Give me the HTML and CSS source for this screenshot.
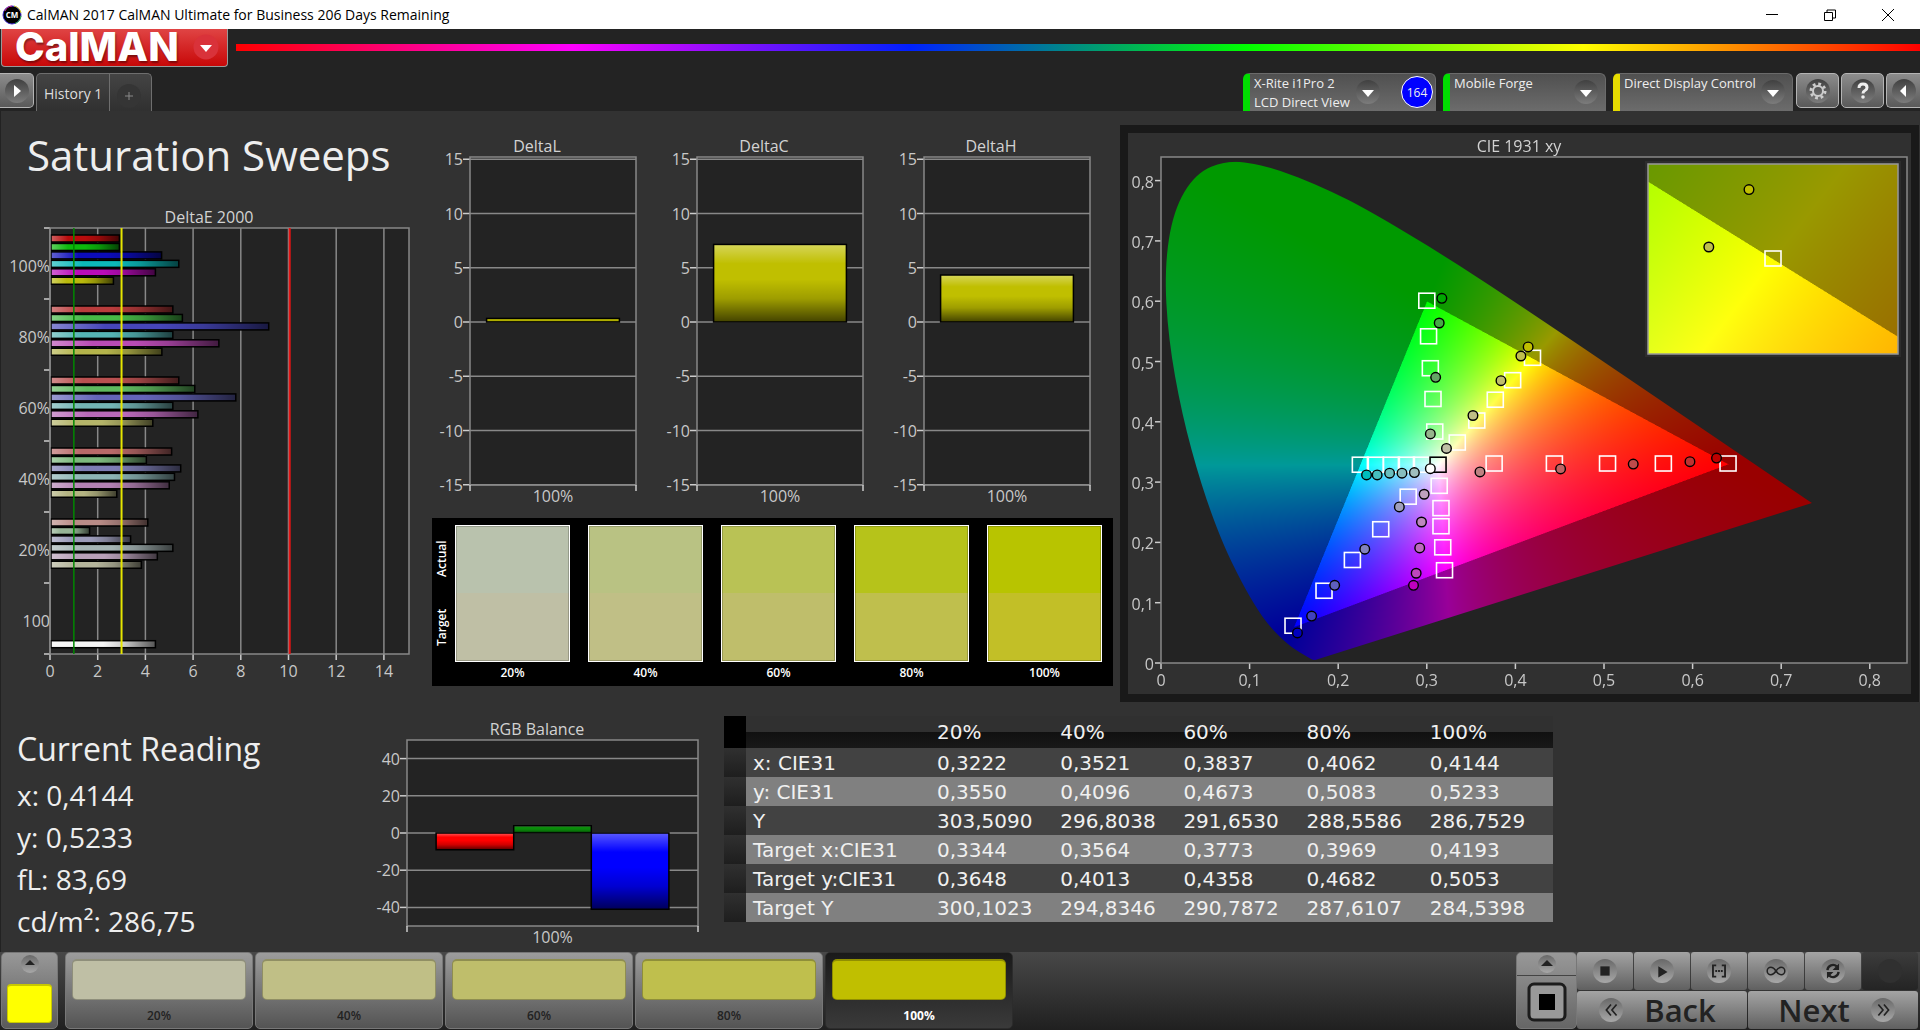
FILE: index.html
```html
<!DOCTYPE html>
<html lang="en">
<head>
    <meta charset="UTF-8">
    <meta name="viewport" content="width=device-width, initial-scale=1.0">
    <title>CalMAN 2017 CalMAN Ultimate for Business</title>
    <link rel="stylesheet" href="styles.css">
</head>
<body>
    <div class="titlebar">
        <svg class="app-icon" viewBox="0 0 20 20">
            <circle cx="10" cy="10" r="9" fill="#000" stroke="#3c28c8" stroke-width="1"/>
            <path d="M3 6a8.500 8.500 0 0 1 7-5" fill="none" stroke="#d02a8a"/>
            <path d="M12 1a9 9 0 0 1 7 7" fill="none" stroke="#c8c820"/>
            <path d="M19 11a9 9 0 0 1-6 7.500" fill="none" stroke="#28b43c"/>
            <text x="10" y="13" text-anchor="middle">CM</text>
        </svg>
        <span class="window-title">CalMAN 2017 CalMAN Ultimate for Business 206 Days Remaining</span>
        <div class="window-controls">
            <button aria-label="Minimize"><svg viewBox="0 0 14 14"><path d="M1 6.500h12"/></svg></button>
            <button aria-label="Restore"><svg viewBox="0 0 14 14"><path d="M1.500 4.500h8v8h-8zM4 4V2h8.500v8H10"/></svg></button>
            <button aria-label="Close"><svg viewBox="0 0 14 14"><path d="M1 1l12 12M13 1L1 13"/></svg></button>
        </div>
    </div>

    <header class="header">
        <div class="brand-row">
            <button class="logo">CalMAN
                <svg viewBox="0 0 26 26"><circle cx="13" cy="13" r="12.500" fill="#d9323a"/><path d="M7 11h12l-6 7z" fill="#fff"/></svg>
            </button>
            <div class="rainbow"></div>
        </div>
        <div class="tab-row">
            <button class="square-btn nav-left" aria-label="Expand">
                <svg viewBox="0 0 28 28"><circle cx="14" cy="14" r="12" fill="url(#knob)"/><path d="M11 8v12l7-6z" fill="#fff"/></svg>
            </button>
            <div class="tabs">
                <button class="tab">History 1</button>
                <button class="tab tab-add" aria-label="Add tab">
                    <svg viewBox="0 0 28 28"><circle cx="14" cy="14" r="12" fill="#353535"/><path d="M14 10v8M10 14h8" stroke="#8a8a8a"/></svg>
                </button>
            </div>
            <div class="devices">
                <button class="device device-meter">
                    <span>X-Rite i1Pro 2<br>LCD Direct View</span>
                    <svg viewBox="0 0 28 28"><circle cx="14" cy="14" r="12" fill="url(#knob)"/><path d="M8 12h12l-6 7z" fill="#fff"/></svg>
                    <b class="count">164</b>
                </button>
                <button class="device device-source">
                    <span>Mobile Forge</span>
                    <svg viewBox="0 0 28 28"><circle cx="14" cy="14" r="12" fill="url(#knob)"/><path d="M8 12h12l-6 7z" fill="#fff"/></svg>
                </button>
                <button class="device device-display">
                    <span>Direct Display Control</span>
                    <svg viewBox="0 0 28 28"><circle cx="14" cy="14" r="12" fill="url(#knob)"/><path d="M8 12h12l-6 7z" fill="#fff"/></svg>
                </button>
                <button class="square-btn" aria-label="Settings">
                    <svg viewBox="0 0 28 28"><circle cx="14" cy="14" r="12" fill="url(#knob)"/><circle cx="14" cy="14" r="5" fill="none" stroke="#ccc" stroke-width="2"/><circle cx="14" cy="14" r="7" fill="none" stroke="#ccc" stroke-width="3" stroke-dasharray="2.750 2.750"/></svg>
                </button>
                <button class="square-btn" aria-label="Help">
                    <svg viewBox="0 0 28 28"><circle cx="14" cy="14" r="12" fill="url(#knob)"/><path d="M10 11q0-4 4-4t4 3.500q0 2-2 3t-2 3" fill="none" stroke="#eee" stroke-width="3"/><circle cx="14" cy="20" r="1.800" fill="#eee"/></svg>
                </button>
                <button class="square-btn nav-right" aria-label="Collapse">
                    <svg viewBox="0 0 28 28"><circle cx="14" cy="14" r="12" fill="url(#knob)"/><path d="M16 8v12l-6-6z" fill="#fff"/></svg>
                </button>
            </div>
        </div>
    </header>

    <main class="workspace">
        <div class="upper">
            <section class="sweeps">
                <h1>Saturation Sweeps</h1>
                <svg id="delta-e" viewBox="0 0 431 490"></svg>
            </section>

            <section class="deltas">
                <svg id="delta-lch" viewBox="0 0 681 407"></svg>
                <div class="swatches">
                    <div class="swatch-side"><span>Actual</span><span>Target</span></div>
                    <figure><div class="swatch swatch-20"></div><figcaption>20%</figcaption></figure>
                    <figure><div class="swatch swatch-40"></div><figcaption>40%</figcaption></figure>
                    <figure><div class="swatch swatch-60"></div><figcaption>60%</figcaption></figure>
                    <figure><div class="swatch swatch-80"></div><figcaption>80%</figcaption></figure>
                    <figure><div class="swatch swatch-100"></div><figcaption>100%</figcaption></figure>
                </div>
            </section>

            <section class="cie">
                <canvas id="gamut" width="1566" height="1122"></canvas>
                <svg id="cie-chart" viewBox="0 0 783 561"></svg>
            </section>
        </div>

        <div class="lower">
            <section class="reading">
                <h2>Current Reading</h2>
                <p>x: 0,4144</p>
                <p>y: 0,5233</p>
                <p>fL: 83,69</p>
                <p>cd/m²: 286,75</p>
            </section>

            <section class="balance">
                <svg id="rgb-balance" viewBox="0 0 344 241"></svg>
            </section>

            <table class="results">
                <thead>
                    <tr><td class="handle"></td><td></td><th>20%</th><th>40%</th><th>60%</th><th>80%</th><th>100%</th></tr>
                </thead>
                <tbody>
                    <tr><td class="handle"></td><th>x: CIE31</th><td>0,3222</td><td>0,3521</td><td>0,3837</td><td>0,4062</td><td>0,4144</td></tr>
                    <tr><td class="handle"></td><th>y: CIE31</th><td>0,3550</td><td>0,4096</td><td>0,4673</td><td>0,5083</td><td>0,5233</td></tr>
                    <tr><td class="handle"></td><th>Y</th><td>303,5090</td><td>296,8038</td><td>291,6530</td><td>288,5586</td><td>286,7529</td></tr>
                    <tr><td class="handle"></td><th>Target x:CIE31</th><td>0,3344</td><td>0,3564</td><td>0,3773</td><td>0,3969</td><td>0,4193</td></tr>
                    <tr><td class="handle"></td><th>Target y:CIE31</th><td>0,3648</td><td>0,4013</td><td>0,4358</td><td>0,4682</td><td>0,5053</td></tr>
                    <tr><td class="handle"></td><th>Target Y</th><td>300,1023</td><td>294,8346</td><td>290,7872</td><td>287,6107</td><td>284,5398</td></tr>
                </tbody>
            </table>
        </div>
    </main>

    <footer class="footer">
        <button class="current-color" aria-label="Pattern color">
            <svg viewBox="0 0 20 20"><circle cx="10" cy="10" r="9" fill="url(#knob-light)"/><path d="M5 11l5-5 5 5z" fill="#222"/></svg>
            <span class="color-chip"></span>
        </button>
        <div class="patches">
            <button class="patch patch-20"><span></span>20%</button>
            <button class="patch patch-40"><span></span>40%</button>
            <button class="patch patch-60"><span></span>60%</button>
            <button class="patch patch-80"><span></span>80%</button>
            <button class="patch patch-100 selected"><span></span>100%</button>
        </div>
        <div class="stop-box">
            <button aria-label="Show more"><svg viewBox="0 0 20 20"><circle cx="10" cy="10" r="9" fill="url(#knob-light)"/><path d="M4 12l6-6 6 6z" fill="#222"/></svg></button>
            <button aria-label="Pattern window"><svg class="big" viewBox="0 0 40 40"><rect x="2" y="2" width="36" height="36" rx="5" fill="#999" stroke="#1c1c1c" stroke-width="3"/><path d="M12 12h16v16H12z"/></svg></button>
        </div>
        <div class="transport">
            <button aria-label="Stop"><svg viewBox="0 0 28 28"><circle cx="14" cy="14" r="13" fill="url(#knob-light)"/><path d="M9 9h10v10H9z" fill="#222"/></svg></button>
            <button aria-label="Play"><svg viewBox="0 0 28 28"><circle cx="14" cy="14" r="13" fill="url(#knob-light)"/><path d="M10 9v12l10-6z" fill="#222"/></svg></button>
            <button aria-label="Measure series"><svg viewBox="0 0 28 28"><circle cx="14" cy="14" r="13" fill="url(#knob-light)"/><path d="M11 8H7.500v12H11M17 8h3.500v12H17" fill="none" stroke="#222" stroke-width="2"/><path d="M10 14h8" stroke="#222" stroke-width="2" stroke-dasharray="2 1"/></svg></button>
            <button aria-label="Continuous"><svg viewBox="0 0 28 28"><circle cx="14" cy="14" r="13" fill="url(#knob-light)"/><path d="M14 14c-2-3-3.500-4-5.500-4a4 4 0 0 0 0 8c2 0 3.500-1 5.500-4s3.500-4 5.500-4a4 4 0 0 1 0 8c-2 0-3.500-1-5.500-4z" fill="none" stroke="#222" stroke-width="1.600"/></svg></button>
            <button aria-label="Refresh"><svg viewBox="0 0 28 28"><circle cx="14" cy="14" r="13" fill="url(#knob-light)"/><path d="M8 13a6 6 0 0 1 10-4M20 15a6 6 0 0 1-10 4" fill="none" stroke="#222" stroke-width="2.500"/><path d="M20.500 6v7h-7zM7.500 22v-7h7z" fill="#222"/></svg></button>
            <button class="disabled" aria-label="Unused" disabled><svg viewBox="0 0 28 28"><circle cx="14" cy="14" r="13" fill="#303030"/></svg></button>
            <button class="wide">
                <svg viewBox="0 0 28 28"><circle cx="14" cy="14" r="13" fill="url(#knob-light)"/><path d="M14 8l-5 6 5 6M20 8l-5 6 5 6" fill="none" stroke="#222" stroke-width="1.800"/></svg>Back
            </button>
            <button class="wide next">Next
                <svg viewBox="0 0 28 28"><circle cx="14" cy="14" r="13" fill="url(#knob-light)"/><path d="M9 8l5 6-5 6M15 8l5 6-5 6" fill="none" stroke="#222" stroke-width="1.800"/></svg>
            </button>
        </div>
    </footer>

    <!-- shared gradients -->
    <svg class="defs" width="0" height="0">
        <linearGradient id="knob" x1="0" y1="0" x2="0" y2="1"><stop offset="0" stop-color="#404040"/><stop offset="1" stop-color="#7c7c7c"/></linearGradient>
        <linearGradient id="knob-light" x1="0" y1="0" x2="0" y2="1"><stop offset="0" stop-color="#686868"/><stop offset="1" stop-color="#a8a8a8"/></linearGradient>
        <linearGradient id="shade-v" x1="0" y1="0" x2="0" y2="1">
            <stop offset="0" stop-color="#fff" stop-opacity=".35"/><stop offset=".25" stop-color="#fff" stop-opacity="0"/>
            <stop offset=".45" stop-color="#000" stop-opacity="0"/><stop offset=".7" stop-color="#000" stop-opacity=".18"/><stop offset="1" stop-color="#000" stop-opacity=".65"/>
        </linearGradient>
        <linearGradient id="shade-h" x1="0" y1="0" x2="1" y2="0">
            <stop offset="0" stop-color="#fff" stop-opacity=".35"/><stop offset=".25" stop-color="#fff" stop-opacity="0"/>
            <stop offset=".5" stop-color="#000" stop-opacity="0"/><stop offset=".7" stop-color="#000" stop-opacity=".18"/><stop offset="1" stop-color="#000" stop-opacity=".65"/>
        </linearGradient>
    </svg>

    <script src="charts.js"></script>
</body>
</html>
```
FILE: styles.css
```css
* {
    box-sizing: border-box;
}
body {
    margin: 0;
    min-height: 100vh;
    display: flex;
    flex-direction: column;
    background-color: #232323;
    color: #eee;
    font-family: "Open Sans", "Noto Sans", sans-serif;
}
button {
    border: 0;
    padding: 0;
    background: none;
    color: inherit;
    font: inherit;
    cursor: pointer;
}
svg {
    display: block;
}
.defs {
    position: absolute;
}

/* window title bar */
.titlebar {
    display: flex;
    align-items: center;
    height: 29px;
    padding-left: 2px;
    background-color: #fff;
    color: #000;
}
.app-icon {
    width: 20px;
    height: 20px;
}
.app-icon text {
    fill: #fff;
    font-size: 8px;
    font-weight: 700;
}
.window-title {
    flex: 1;
    padding-left: 5px;
    font-size: 14px;
}
.window-controls {
    display: flex;
    gap: 44px;
    padding-right: 25px;
}
.window-controls svg {
    width: 14px;
    height: 14px;
    fill: none;
    stroke: #000;
}

/* header */
.brand-row {
    display: flex;
    gap: 8px;
    padding-left: 1px;
}
.logo {
    display: flex;
    align-items: center;
    gap: 14px;
    height: 38px;
    padding: 0 8px 2px 13px;
    border: 1px solid #999;
    border-top: 0;
    border-radius: 0 0 4px 4px;
    background: linear-gradient(#e04444, #c80808);
    color: #fff;
    font-family: Inter, sans-serif;
    font-size: 40px;
    font-weight: 800;
    line-height: 36px;
    text-shadow: 1px 2px 2px rgba(0, 0, 0, .4);
}
.logo svg {
    width: 26px;
    height: 26px;
}
.rainbow {
    flex: 1;
    height: 7px;
    margin-top: 15px;
    background: linear-gradient(90deg, #f00, #f0f, #0020ff, #0f0, #ff0, #f00);
}
.tab-row {
    display: flex;
    align-items: flex-start;
    padding-top: 6px;
}
.square-btn {
    width: 43px;
    height: 35px;
    display: flex;
    align-items: center;
    justify-content: center;
    border: 1px solid #b4b4b4;
    border-radius: 5px;
    background: linear-gradient(#8c8c8c, #5a5a5a);
}
.square-btn svg,
.tab svg,
.device svg {
    width: 28px;
    height: 28px;
}
.nav-left {
    width: 34px;
    border-left: 0;
    border-radius: 0 5px 5px 0;
}
.nav-right {
    width: 34px;
    border-right: 0;
    border-radius: 5px 0 0 5px;
}
.tabs {
    display: flex;
    margin-left: 2px;
    border: 1px solid #6e6e6e;
    border-bottom: 0;
    border-radius: 5px 5px 0 0;
    background: linear-gradient(#444, #303030);
}
.tab {
    height: 37px;
    padding: 2px 7px 0;
    color: #ddd;
    font-size: 14px;
}
.tab-add {
    border-left: 1px solid #6e6e6e;
    padding: 6px 8px 0 5px;
}
.devices {
    display: flex;
    gap: 2px;
    margin-left: auto;
}
.device {
    display: flex;
    height: 38px;
    margin-right: 5px;
    padding-left: 4px;
    border: 1px solid #6a6a6a;
    border-bottom: 0;
    border-left: 7px solid #0d0;
    border-radius: 6px 6px 0 0;
    background: linear-gradient(#505050, #6c6c6c);
    font-size: 13px;
    line-height: 19px;
    text-align: left;
    white-space: nowrap;
}
.device span {
    flex: 1;
}
.device > svg {
    flex: none;
    margin: 4px 5px 0 0;
}
.device-meter {
    width: 193px;
}
.device-source {
    width: 163px;
}
.device-display {
    width: 180px;
    margin-right: 1px;
    border-left-color: #e6dc00;
}
.device-meter > svg {
    margin-right: 9px;
}
.count {
    flex: none;
    display: flex;
    align-items: center;
    justify-content: center;
    width: 32px;
    height: 32px;
    margin: 2px 2px 0 10px;
    border: 1px solid #fff;
    border-radius: 50%;
    background-color: #00f;
    font-size: 12px;
    font-weight: 400;
}

/* workspace */
.workspace {
    flex: 1;
    display: flex;
    flex-direction: column;
    border-left: 1px solid #222;
    background-color: #323232;
}
.upper {
    display: grid;
    grid-template-columns: 431fr 681fr 807fr;
    align-items: start;
}
.upper svg,
.balance svg {
    width: 100%;
    height: auto;
}
.sweeps h1 {
    margin: 0;
    padding: 14px 0 0 26px;
    font-size: 42px;
    font-weight: 400;
    line-height: 60px;
    height: 89px;
    white-space: nowrap;
}
.chart-text,
.chart-title {
    fill: #c8c8c8;
    font-size: 16px;
}
.chart-title {
    fill: #d2d2d2;
}
.swatches {
    display: grid;
    grid-template-columns: 10px repeat(5, 1fr);
    height: 168px;
    padding: 7px 2px 0 4px;
    background-color: #000;
    color: #fff;
    font-size: 12px;
    font-weight: 600;
}
.swatch-side {
    display: flex;
    flex-direction: row-reverse;
    justify-content: space-around;
    width: 12px;
    height: 137px;
    writing-mode: vertical-rl;
    transform: rotate(180deg);
    line-height: 12px;
}
.swatches figure {
    margin: 0;
    padding: 0 9px;
    text-align: center;
}
.swatch {
    height: 137px;
    margin-bottom: 2px;
    border: 1px solid #fff;
    box-shadow: inset 0 0 0 1px rgba(0, 0, 0, .2);
}
.swatch-20 { background: linear-gradient(#b9c2ad 50%, #bfbfa5 50%); }
.swatch-40 { background: linear-gradient(#b9c283 50%, #c0bf86 50%); }
.swatch-60 { background: linear-gradient(#b9c255 50%, #bfbe6b 50%); }
.swatch-80 { background: linear-gradient(#b6c31a 50%, #bfbf4d 50%); }
.swatch-100 { background: linear-gradient(#b8c400 50%, #c2bf27 50%); }
.cie {
    display: grid;
    margin: 14px 1px 0 7px;
    border: 8px solid #191919;
    background-color: #303030;
}
.cie canvas,
.cie svg {
    grid-area: 1 / 1;
    width: 100%;
}

.lower {
    display: grid;
    grid-template-columns: 364fr 344fr 15fr 829fr 367fr;
    align-items: start;
}
.reading {
    padding: 26px 0 0 16px;
    white-space: nowrap;
}
.reading h2,
.reading p {
    margin: 0;
    font-size: 28px;
    font-weight: 400;
    line-height: 42px;
}
.reading h2 {
    margin-bottom: 4px;
    font-size: 32px;
}
.balance {
    padding-top: 3px;
}
.results {
    grid-column: 4;
    width: 100%;
    margin-top: 14px;
    border-collapse: collapse;
    table-layout: fixed;
    color: #f0f0f0;
    font-family: "DejaVu Sans", sans-serif;
    font-size: 20px;
    line-height: 24px;
}
.results td,
.results th {
    width: 15%;
    height: 29px;
    padding: 0;
    font-weight: 400;
    text-align: left;
}
.results .handle {
    width: 22px;
    background: linear-gradient(#303030, #1e1e1e);
}
.results tr > :nth-child(2) {
    width: 191px;
    padding-left: 7px;
}
.results thead tr {
    background: linear-gradient(#303030 50%, #101010 50%, #181818);
}
.results thead th,
.results thead td {
    height: 32px;
}
.results thead .handle {
    background: #000;
}
.results tbody tr {
    background-color: #424242;
}
.results tbody tr:nth-child(even) {
    background-color: #808080;
}

/* bottom bar */
.footer {
    display: flex;
    align-items: flex-start;
    height: 78px;
    padding: 0 0 0 1px;
    background: linear-gradient(#484848, #202020);
    color: #222;
}
.current-color {
    display: flex;
    flex-direction: column;
    align-items: center;
    justify-content: space-between;
    width: 57px;
    height: 77px;
    padding: 1px 0 5px;
    border: 1px solid #777;
    border-radius: 5px;
    background: linear-gradient(#989898, #5a5a5a);
}
.current-color svg,
.stop-box svg {
    width: 20px;
    height: 20px;
}
.color-chip {
    width: 45px;
    height: 39px;
    border: 1px solid #c8c800;
    border-top-width: 2px;
    border-radius: 4px;
    background-color: #ff0;
}
.patches {
    flex: 1;
    display: flex;
    gap: 2px;
    margin-left: 7px;
}
.patch {
    width: 188px;
    height: 77px;
    display: flex;
    flex-direction: column;
    padding: 6px 6px 0;
    border: 1px solid #777;
    border-radius: 5px;
    background: linear-gradient(#9c9c9c, #545454);
    font-size: 12px;
    font-weight: 600;
    line-height: 24px;
    text-align: center;
}
.patch span {
    display: block;
    align-self: stretch;
    height: 46px;
    margin-bottom: 4px;
    border: 1px solid rgba(0, 0, 0, .25);
    border-top-width: 2px;
    border-radius: 5px;
}
.patch-20 span { background-color: #bfbfa5; }
.patch-40 span { background-color: #c0bf86; }
.patch-60 span { background-color: #bfbe6b; }
.patch-80 span { background-color: #bfbf4d; }
.patch-100 span { background-color: #c0bf00; }
.patch.selected {
    border-color: #2c2c2c;
    background: linear-gradient(#1a1a1a, #3a3a3a);
    color: #fff;
    font-weight: 700;
}
.stop-box {
    display: flex;
    flex-direction: column;
    width: 61px;
    height: 77px;
    border: 1px solid #777;
    border-radius: 5px;
    background: linear-gradient(#989898, #666);
}
.stop-box button {
    display: flex;
    align-items: center;
    justify-content: center;
    height: 52px;
}
.stop-box button:first-child {
    height: 23px;
    border-bottom: 1px solid #444;
}
.stop-box .big {
    width: 40px;
    height: 40px;
}
.transport {
    display: grid;
    grid-template-columns: repeat(6, 56px);
    grid-template-rows: 38px 38px;
    gap: 1px;
    padding-right: 2px;
}
.transport button {
    display: flex;
    align-items: center;
    justify-content: center;
    border-radius: 3px;
    background: linear-gradient(#a4a4a4, #606060);
}
.transport svg {
    width: 26px;
    height: 26px;
}
.transport .disabled {
    background: linear-gradient(#3c3c3c, #242424);
}
.transport .wide {
    grid-column: span 3;
    gap: 20px;
    padding-right: 10px;
    font-size: 31px;
    font-weight: 600;
    line-height: 36px;
}
.transport .next {
    padding: 0 0 0 8px;
}
```
FILE: charts.js
```js
const SVG_NS = 'http://www.w3.org/2000/svg';

function add(parent, tag, attrs, content) {
    const el = document.createElementNS(SVG_NS, tag);
    for (const key in attrs) {
        el.setAttribute(key, attrs[key]);
    }
    if (content !== undefined) {
        el.textContent = content;
    }
    parent.appendChild(el);
    return el;
}

function line(svg, x1, y1, x2, y2, color, width) {
    add(svg, 'line', { x1, y1, x2, y2, stroke: color, 'stroke-width': width || 1 });
}

function label(svg, x, y, text, anchor, cls) {
    add(svg, 'text', { x, y, class: cls || 'chart-text', 'text-anchor': anchor || 'middle' }, text);
}

// Bar with a glossy overlay
function bar(svg, x, y, width, height, color, shade) {
    add(svg, 'rect', { x, y, width, height, fill: color });
    add(svg, 'rect', { x, y, width, height, fill: 'url(#' + shade + ')', stroke: '#000', 'stroke-width': 1.5 });
}

// DeltaE 2000, horizontal bars
function drawDeltaE() {
    const svg = document.getElementById('delta-e');
    const left = 49, right = 408, top = 28, bottom = 454;
    const unit = 23.85;
    const band = (bottom - top) / 6;
    const groups = [
        ['100%', [2.91, 2.91, 4.68, 5.4, 4.42, 2.66], ['#b90c0c', '#0cb90c', '#0c0cb9', '#0cb9b9', '#b90cb9', '#b9b90c']],
        ['80%', [5.15, 5.55, 9.17, 5.15, 7.08, 4.69], ['#b93c3c', '#46b946', '#4646b9', '#55b4b4', '#b94bb4', '#b4b44b']],
        ['60%', [5.4, 6.07, 7.79, 5.15, 6.2, 4.31], ['#b95050', '#5fb95f', '#6464b9', '#73b4b4', '#b969b9', '#b4b469']],
        ['40%', [5.1, 4.04, 5.48, 5.22, 5, 2.8], ['#b96969', '#7db97d', '#7d7db4', '#8cb4b4', '#b482b4', '#b4b482']],
        ['20%', [4.1, 1.66, 3.38, 5.15, 4.5, 3.83], ['#b98c87', '#96b496', '#9b9bb9', '#a5b4b4', '#b9a0b9', '#b4b49b']],
        ['100', [0, 0, 0, 0, 0, 0, 4.42], ['', '', '', '', '', '', '#f5f5f5']]
    ];

    label(svg, 208, 23, 'DeltaE 2000', 'middle', 'chart-title');
    add(svg, 'rect', { x: left, y: top, width: right - left, height: bottom - top, fill: '#232323' });
    for (let v = 0; v <= 14; v += 2) {
        const x = left + v * unit;
        line(svg, x, top, x, bottom, '#888', 1.5);
        line(svg, x, bottom, x, bottom + 6, '#ccc', 1.5);
        label(svg, x, bottom + 23, v);
    }
    groups.forEach(([name, values, colors], g) => {
        const start = top + g * band;
        values.forEach((value, i) => {
            if (value) {
                bar(svg, left + 1, start + 7 + i * 8.45, value * unit - 1, 7, colors[i], 'shade-h');
            }
        });
        line(svg, left - 6, start, left, start, '#ccc', 1.5);
        label(svg, left, start + band / 2 + 8, name, 'end');
    });
    line(svg, left - 6, bottom, left, bottom, '#ccc', 1.5);
    add(svg, 'rect', { x: left, y: top, width: right - left, height: bottom - top, fill: 'none', stroke: '#888', 'stroke-width': 1.5 });
    // tolerance lines
    line(svg, left + unit, top, left + unit, bottom, '#080', 1.5);
    line(svg, left + 3 * unit, top, left + 3 * unit, bottom, '#e6e600', 2);
    line(svg, left + 10.05 * unit, top, left + 10.05 * unit, bottom, '#e61414', 2);
}

// Vertical bar chart with a zero line
function drawColumns(svg, o) {
    add(svg, 'rect', { x: o.x, y: o.y, width: o.width, height: o.height, fill: '#232323' });
    label(svg, o.titleX, o.y - 5, o.title, 'middle', 'chart-title');
    o.ticks.forEach(v => {
        const y = o.zero - v * o.unit;
        line(svg, o.x, y, o.x + o.width, y, '#888', 1.5);
        line(svg, o.x - 7, y, o.x, y, '#ccc', 1.5);
        label(svg, o.x - 7, y + 6, v, 'end');
    });
    add(svg, 'rect', { x: o.x, y: o.y, width: o.width, height: o.height, fill: 'none', stroke: '#888', 'stroke-width': 1.5 });
    [o.x, o.x + o.width].forEach(x => line(svg, x, o.y + o.height, x, o.y + o.height + 6, '#ccc', 1.5));
    const step = o.width * 0.8 / o.bars.length;
    o.bars.forEach(([value, color], i) => {
        const height = Math.abs(value) * o.unit;
        bar(svg, o.x + o.width * 0.1 + i * step, value > 0 ? o.zero - height : o.zero, step, height, color, 'shade-v');
    });
    label(svg, o.x + o.width / 2, o.y + o.height + 17, '100%');
}

function drawDeltas() {
    const svg = document.getElementById('delta-lch');
    [['DeltaL', 0.33], ['DeltaC', 7.15], ['DeltaH', 4.33]].forEach(([title, value], i) => {
        const x = 38 + i * 227;
        drawColumns(svg, {
            title, titleX: x + 67, x, y: 46, width: 166, height: 328,
            zero: 211, unit: 10.85, ticks: [15, 10, 5, 0, -5, -10, -15], bars: [[value, '#c0bf00']]
        });
    });
}

function drawBalance() {
    drawColumns(document.getElementById('rgb-balance'), {
        title: 'RGB Balance', titleX: 172, x: 42, y: 35, width: 291, height: 186,
        zero: 128, unit: 1.86, ticks: [40, 20, 0, -20, -40],
        bars: [[-9, '#f00'], [3.9, '#0a8c0a'], [-41, '#00f']]
    });
}

// CIE 1931 xy
const locus = [
    [.1741, .0050], [.1733, .0048], [.1714, .0051], [.1689, .0069], [.1644, .0109], [.1566, .0177],
    [.1440, .0297], [.1241, .0578], [.1096, .0868], [.0913, .1327], [.0687, .2007], [.0454, .2950],
    [.0235, .4127], [.0082, .5384], [.0039, .6548], [.0139, .7502], [.0389, .8120], [.0743, .8338],
    [.1142, .8262], [.1547, .8059], [.1929, .7816], [.2296, .7543], [.3016, .6923], [.3731, .6245],
    [.4441, .5547], [.5125, .4866], [.5752, .4242], [.6270, .3725], [.6658, .3340], [.6915, .3083],
    [.7190, .2809], [.7347, .2653]
];
const plot = { x: 33, y: 24, width: 746, height: 506 };
const px = x => plot.x + x * 886;
const py = y => plot.y + plot.height - y * 603;
const inset = { x: 520, y: 31, width: 250, height: 190, cx: .4193, cy: .5053, sx: 4900, sy: 3830 };
const ix = x => inset.x + inset.width / 2 + (x - inset.cx) * inset.sx;
const iy = y => inset.y + inset.height / 2 - (y - inset.cy) * inset.sy;

// Fully bright colour of a chromaticity, darker outside Rec.709
function xyToRgb(x, y) {
    const X = x / y, Z = (1 - x - y) / y;
    const rgb = [
        3.2406 * X - 1.5372 - 0.4986 * Z,
        -0.9689 * X + 1.8758 + 0.0415 * Z,
        0.0557 * X - 0.2040 + 1.0570 * Z
    ];
    const scale = Math.min(...rgb) < 0 ? 153 : 255;
    const max = Math.max(...rgb);
    return rgb.map(c => Math.max(c, 0) / max * scale);
}

function paint(width, height, toX, toY) {
    const layer = document.createElement('canvas');
    layer.width = width;
    layer.height = height;
    const ctx = layer.getContext('2d');
    const image = ctx.createImageData(width, height);
    for (let j = 0; j < height; j++) {
        for (let i = 0; i < width; i++) {
            const rgb = xyToRgb(toX(i), Math.max(toY(j), 0.0001));
            const p = (j * width + i) * 4;
            image.data[p] = rgb[0];
            image.data[p + 1] = rgb[1];
            image.data[p + 2] = rgb[2];
            image.data[p + 3] = 255;
        }
    }
    ctx.putImageData(image, 0, 0);
    return layer;
}

function drawGamut() {
    const ctx = document.getElementById('gamut').getContext('2d');
    ctx.scale(2, 2);
    ctx.fillStyle = '#232323';
    ctx.fillRect(plot.x, plot.y, plot.width, plot.height);

    // smooth outline through the midpoints of the locus samples
    ctx.save();
    ctx.beginPath();
    ctx.moveTo(px(locus[0][0]), py(locus[0][1]));
    for (let i = 1; i < locus.length - 1; i++) {
        const [x, y] = locus[i], [nx, ny] = locus[i + 1];
        ctx.quadraticCurveTo(px(x), py(y), px((x + nx) / 2), py((y + ny) / 2));
    }
    ctx.lineTo(px(.7347), py(.2653));
    ctx.closePath();
    ctx.clip();
    const main = paint(plot.width * 2, plot.height * 2, i => i / 2 / 886, j => (plot.height - j / 2) / 603);
    ctx.drawImage(main, plot.x, plot.y, plot.width, plot.height);
    ctx.restore();

    ctx.fillStyle = '#2d2d2d';
    ctx.fillRect(inset.x - 3, inset.y - 3, inset.width + 6, inset.height + 6);
    const zoomed = paint(inset.width * 2, inset.height * 2,
        i => inset.cx + (i / 2 - inset.width / 2) / inset.sx,
        j => inset.cy - (j / 2 - inset.height / 2) / inset.sy);
    ctx.drawImage(zoomed, inset.x, inset.y, inset.width, inset.height);
}

const targets = [
    [.300, .600], [.302, .541], [.304, .488], [.307, .437], [.309, .383],
    [.3344, .3648], [.3564, .4013], [.3773, .4358], [.3969, .4682], [.4193, .5053],
    [.376, .330], [.444, .330], [.504, .330], [.567, .330], [.640, .330],
    [.225, .328], [.242, .328], [.260, .328], [.277, .328], [.294, .328],
    [.279, .275], [.248, .221], [.216, .170], [.184, .119], [.149, .061],
    [.314, .293], [.316, .256], [.316, .226], [.318, .191], [.320, .153]
];
const measured = [
    [.304, .379, '#96b48c'], [.310, .473, '#64a564'], [.314, .563, '#46aa46'], [.317, .604, '#00a800'],
    [.3222, .3550, '#bfbfa5'], [.3521, .4096, '#c0bf86'], [.3837, .4673, '#bfbe6b'], [.4062, .5083, '#bfbf4d'], [.4144, .5233, '#c0bf00'],
    [.232, .311, '#00bebe'], [.244, .311, '#46bebe'], [.258, .314, '#69bebe'], [.272, .314, '#87bebe'], [.286, .315, '#a0bebe'],
    [.360, .316, '#be8282'], [.451, .321, '#be6464'], [.533, .329, '#be4b4b'], [.597, .333, '#be3232'], [.627, .339, '#be0000'],
    [.269, .258, '#a0a0be'], [.230, .188, '#8282be'], [.196, .128, '#5f5fbe'], [.170, .077, '#4141be'], [.154, .049, '#0000be'],
    [.297, .279, '#bea0be'], [.294, .233, '#be87be'], [.292, .190, '#be69be'], [.288, .148, '#be46be'], [.285, .128, '#be00be'],
    [.304, .3215, '#fff']
];

function square(svg, x, y, color) {
    add(svg, 'rect', { x: x - 8, y: y - 8, width: 16, height: 15, fill: 'none', stroke: color, 'stroke-width': 1.6 });
}

function dot(svg, x, y, color) {
    add(svg, 'circle', { cx: x, cy: y - 0.5, r: 4.8, fill: color, stroke: '#000', 'stroke-width': 1.4 });
}

function drawCie() {
    const svg = document.getElementById('cie-chart');
    label(svg, 391, 19, 'CIE 1931 xy', 'middle', 'chart-title');
    const bottom = plot.y + plot.height;
    for (let v = 0; v <= 8; v++) {
        const text = v ? '0,' + v : '0';
        line(svg, px(v / 10), bottom, px(v / 10), bottom + 6, '#ccc', 1.5);
        line(svg, plot.x - 6, py(v / 10), plot.x, py(v / 10), '#ccc', 1.5);
        label(svg, px(v / 10), bottom + 23, text);
        label(svg, plot.x - 7, py(v / 10) + 7, text, 'end');
    }
    add(svg, 'rect', { ...plot, fill: 'none', stroke: '#888', 'stroke-width': 1.5 });
    targets.forEach(([x, y]) => square(svg, px(x), py(y), '#fff'));
    square(svg, px(.3127), py(.328), '#000');
    measured.forEach(([x, y, color]) => dot(svg, px(x), py(y), color));

    add(svg, 'rect', { x: inset.x, y: inset.y, width: inset.width, height: inset.height, fill: 'none', stroke: '#999', 'stroke-width': 1.5 });
    square(svg, ix(.4193), iy(.5053), '#fff');
    dot(svg, ix(.4144), iy(.5233), '#c0bf00');
    dot(svg, ix(.4062), iy(.5083), '#bfbf4d');
}

drawDeltaE();
drawDeltas();
drawBalance();
drawGamut();
drawCie();
```
